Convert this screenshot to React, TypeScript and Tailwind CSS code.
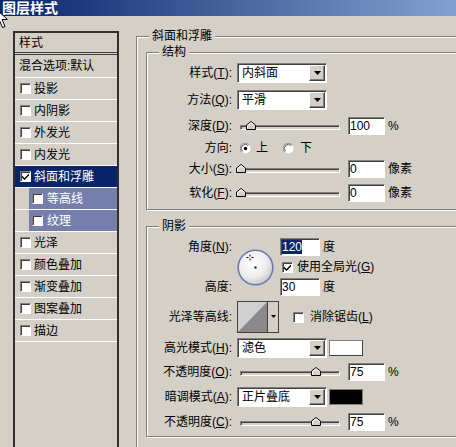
import type { ReactNode } from 'react';

const sunken =
  'border border-t-[#808080] border-l-[#808080] border-b-white border-r-white shadow-[inset_1px_1px_0_#404040]';

function Check({ checked }: { checked?: boolean }) {
  return (
    <span className="flex w-[11px] h-[11px] shrink-0 items-center justify-center bg-white border border-t-[#808080] border-l-[#808080] border-b-white border-r-white shadow-[inset_1px_1px_0_#404040]">
      {checked && (
        <svg width="7" height="7" viewBox="0 0 7 7">
          <path d="M0 2.5 L2.5 5 L7 0.5 V2.5 L2.5 7 L0 4.5 Z" fill="#000" />
        </svg>
      )}
    </span>
  );
}

function Radio({ on }: { on?: boolean }) {
  return (
    <svg width="11" height="11" viewBox="0 0 12 12" className="shrink-0">
      <circle cx="6" cy="6" r="5.5" fill="#fff" />
      <path d="M1.8 10 A5.5 5.5 0 0 1 10 1.8" fill="none" stroke="#808080" />
      <path d="M2.8 9 A4.3 4.3 0 0 1 9 2.8" fill="none" stroke="#404040" />
      {on && <circle cx="6" cy="6" r="1.8" fill="#000" />}
    </svg>
  );
}

function Label({ children }: { children: ReactNode }) {
  return <div className="w-[85px] shrink-0 text-right whitespace-nowrap">{children}</div>;
}

function Select({ value }: { value: string }) {
  return (
    <div className={`ml-[5px] flex h-[20px] w-[90px] shrink-0 items-center bg-white ${sunken}`}>
      <span className="flex-1 pl-[4px] whitespace-nowrap">{value}</span>
      <span className="mr-[1px] flex h-[16px] w-[16px] items-center justify-center bg-[#d4d0c8] border border-t-white border-l-white border-b-[#404040] border-r-[#404040] shadow-[inset_-1px_-1px_0_#808080]">
        <svg width="7" height="4" viewBox="0 0 7 4">
          <path d="M0 0 H7 L3.5 4 Z" fill="#000" />
        </svg>
      </span>
    </div>
  );
}

function Field({ value, wide, selected }: { value: string; wide?: boolean; selected?: boolean }) {
  return (
    <div
      className={`flex h-[18px] shrink-0 items-center bg-white pl-[1px] leading-[14px] ${wide ? 'w-[40px]' : 'w-[37px]'} ${sunken}`}
    >
      {selected ? <span className="bg-[#0a246a] text-white">{value}</span> : value}
    </div>
  );
}

function Slider({ frac }: { frac: number }) {
  return (
    <div className="relative ml-[5px] h-[18px] w-[103px] shrink-0 pt-[8px]">
      <div className="ml-[3px] h-[5px] w-[100px] bg-[#d4d0c8] border border-t-[#808080] border-l-[#808080] border-b-white border-r-white shadow-[inset_1px_1px_0_#404040]" />
      <svg
        className="absolute top-[4px]"
        style={{ left: 3 + frac * 100 - 4 }}
        width="10"
        height="9"
        viewBox="0 0 10 9"
      >
        <path d="M0.5 8.5 V4 L5 0.5 L9.5 4 V8.5 Z" fill="#d4d0c8" stroke="#000" />
        <path d="M1.5 7.5 V4.5 L5 1.8 L8.5 4.5" fill="none" stroke="#fff" />
      </svg>
    </div>
  );
}

function SliderRow({ label, frac, value, unit, className }: { label: ReactNode; frac: number; value: string; unit: string; className: string }) {
  return (
    <div className={`flex h-[18px] items-center ${className}`}>
      <Label>{label}</Label>
      <Slider frac={frac} />
      <div className="ml-[8px]">
        <Field value={value} />
      </div>
      <span className="ml-[3px]">{unit}</span>
    </div>
  );
}

function Dial() {
  return (
    <svg width="37" height="37" viewBox="0 0 37 37">
      <defs>
        <radialGradient id="dialFill" cx="40%" cy="35%" r="70%">
          <stop offset="0" stopColor="#ffffff" />
          <stop offset="0.6" stopColor="#eeeeee" />
          <stop offset="1" stopColor="#c4c4c4" />
        </radialGradient>
      </defs>
      <circle cx="18.5" cy="18.5" r="17.3" fill="url(#dialFill)" stroke="#6a7cae" strokeWidth="1.6" />
      <rect x="17.5" y="17.5" width="2" height="2" fill="#000" />
      <rect x="12.5" y="5.5" width="1" height="2" fill="#000" />
      <rect x="12.5" y="9.5" width="1" height="2" fill="#000" />
      <rect x="9.5" y="8" width="2" height="1" fill="#000" />
      <rect x="14.5" y="8" width="2" height="1" fill="#000" />
    </svg>
  );
}

function Contour() {
  return (
    <div className="ml-[5px] h-[32px] w-[42px] shrink-0 border border-[#404040] bg-[#d4d0c8]">
      <svg width="40" height="30" viewBox="0 0 40 30" className="block">
        <rect x="0" y="0" width="29" height="30" fill="#d0d0d0" />
        <polygon points="0,30 29,0 29,30" fill="#8a8a8a" />
        <rect x="29" y="0" width="1" height="30" fill="#404040" />
        <rect x="30" y="0" width="10" height="30" fill="#d4d0c8" />
        <path d="M33 13 H38 L35.5 16 Z" fill="#000" />
      </svg>
    </div>
  );
}

type Item = { label: string; checked?: boolean; selected?: boolean; sub?: boolean };

const items: Item[] = [
  { label: '投影' },
  { label: '内阴影' },
  { label: '外发光' },
  { label: '内发光' },
  { label: '斜面和浮雕', checked: true, selected: true },
  { label: '等高线', sub: true },
  { label: '纹理', sub: true },
  { label: '光泽' },
  { label: '颜色叠加' },
  { label: '渐变叠加' },
  { label: '图案叠加' },
  { label: '描边' },
];

function ListRow({ item }: { item: Item }) {
  if (item.sub) {
    return (
      <div className="flex h-[22px] border-b border-white">
        <div className="ml-[14px] flex flex-1 items-center bg-[#767fab] pl-[3px] text-white">
          <Check />
          <span className="ml-[4px]">{item.label}</span>
        </div>
      </div>
    );
  }
  return (
    <div
      className={`flex h-[22px] items-center border-b border-white pl-[5px] ${item.selected ? 'bg-[#0a246a] text-white' : ''}`}
    >
      <Check checked={item.checked} />
      <span className="ml-[3px]">{item.label}</span>
    </div>
  );
}

function Cursor() {
  return (
    <svg className="absolute left-[-5px] top-[8px]" width="14" height="21" viewBox="0 0 14 21">
      <path d="M0.5 0.5 V16.5 L4.5 12.5 L7.5 19.5 L10 18.5 L7 11.5 H12.5 Z" fill="#fff" stroke="#000" />
    </svg>
  );
}

export default function App() {
  return (
    <div className="relative h-[447px] w-[456px] overflow-hidden bg-[#d4d0c8] text-[12px] leading-[14px] text-black font-['Liberation_Sans','Noto_Sans_CJK_SC',sans-serif]">
      <div className="h-[16px] bg-[linear-gradient(to_right,#0a246a,#81a2d0)] pl-[2px] text-[14px] font-bold leading-[16px] text-white">
        图层样式
      </div>

      <div className="flex">
        <div className="ml-[13px] mt-[15px] h-[430px] w-[106px] shrink-0 border-2 border-[#303030]">
          <div className="flex h-[22px] items-center border-b-[3px] border-double border-[#404040] pl-[4px]">样式</div>
          <div className="flex h-[23px] items-center border-b border-white pl-[4px]">混合选项:默认</div>
          {items.map((it) => (
            <ListRow key={it.label} item={it} />
          ))}
        </div>

        <fieldset className="ml-[17px] mt-[13px] h-[430px] w-[340px] shrink-0 border border-[#808080] shadow-[inset_1px_1px_0_#fff,1px_1px_0_#fff]">
          <legend className="ml-[12px] bg-[#d4d0c8] px-[3px] leading-[14px]">斜面和浮雕</legend>

          <fieldset className="ml-[9px] mt-[2px] w-[320px] border border-[#808080] shadow-[inset_1px_1px_0_#fff,1px_1px_0_#fff]">
            <legend className="ml-[12px] bg-[#d4d0c8] px-[3px] leading-[14px]">结构</legend>
            <div className="flex flex-col pb-[7px] pt-[4px]">
              <div className="flex h-[20px] items-center">
                <Label>
                  样式(<u>T</u>):
                </Label>
                <Select value="内斜面" />
              </div>
              <div className="mt-[7px] flex h-[20px] items-center">
                <Label>
                  方法(<u>Q</u>):
                </Label>
                <Select value="平滑" />
              </div>
              <SliderRow
                className="mt-[7px]"
                label={<>深度(<u>D</u>):</>}
                frac={0.1}
                value="100"
                unit="%"
              />
              <div className="mt-[4px] flex h-[18px] items-center">
                <Label>方向:</Label>
                <span className="ml-[8px]">
                  <Radio on />
                </span>
                <span className="ml-[5px]">上</span>
                <span className="ml-[15px]">
                  <Radio />
                </span>
                <span className="ml-[6px]">下</span>
              </div>
              <SliderRow
                className="mt-[3px]"
                label={<>大小(<u>S</u>):</>}
                frac={0}
                value="0"
                unit="像素"
              />
              <SliderRow
                className="mt-[6px]"
                label={<>软化(<u>F</u>):</>}
                frac={0}
                value="0"
                unit="像素"
              />
            </div>
          </fieldset>

          <fieldset className="ml-[9px] mt-[9px] w-[320px] border border-[#808080] shadow-[inset_1px_1px_0_#fff,1px_1px_0_#fff]">
            <legend className="ml-[12px] bg-[#d4d0c8] px-[3px] leading-[14px]">阴影</legend>
            <div className="flex flex-col pb-[5px] pt-[5px]">
              <div className="flex h-[58px]">
                <div className="flex w-[85px] shrink-0 flex-col justify-between text-right">
                  <div className="h-[18px] leading-[18px]">
                    角度(<u>N</u>):
                  </div>
                  <div className="h-[18px] leading-[18px]">高度:</div>
                </div>
                <div className="ml-[5px] self-center">
                  <Dial />
                </div>
                <div className="ml-[6px] flex flex-col gap-[2px]">
                  <div className="flex h-[18px] items-center">
                    <Field value="120" wide selected />
                    <span className="ml-[3px]">度</span>
                  </div>
                  <div className="flex h-[18px] items-center pl-[2px]">
                    <Check checked />
                    <span className="ml-[4px]">
                      使用全局光(<u>G</u>)
                    </span>
                  </div>
                  <div className="flex h-[18px] items-center">
                    <Field value="30" wide />
                    <span className="ml-[3px]">度</span>
                  </div>
                </div>
              </div>

              <div className="mt-[5px] flex h-[32px] items-center">
                <Label>光泽等高线:</Label>
                <Contour />
                <span className="ml-[14px]">
                  <Check />
                </span>
                <span className="ml-[6px]">
                  消除锯齿(<u>L</u>)
                </span>
              </div>

              <div className="mt-[5px] flex h-[20px] items-center">
                <Label>
                  高光模式(<u>H</u>):
                </Label>
                <Select value="滤色" />
                <span className="ml-[2px] h-[16px] w-[34px] border border-[#808080] border-b-[#404040] border-r-[#404040] bg-white" />
              </div>

              <SliderRow
                className="mt-[5px]"
                label={<>不透明度(<u>O</u>):</>}
                frac={0.75}
                value="75"
                unit="%"
              />

              <div className="mt-[6px] flex h-[20px] items-center">
                <Label>
                  暗调模式(<u>A</u>):
                </Label>
                <Select value="正片叠底" />
                <span className="ml-[2px] h-[16px] w-[34px] border border-[#808080] bg-black" />
              </div>

              <SliderRow
                className="mt-[6px]"
                label={<>不透明度(<u>C</u>):</>}
                frac={0.75}
                value="75"
                unit="%"
              />
            </div>
          </fieldset>
        </fieldset>
      </div>

      <Cursor />
    </div>
  );
}
